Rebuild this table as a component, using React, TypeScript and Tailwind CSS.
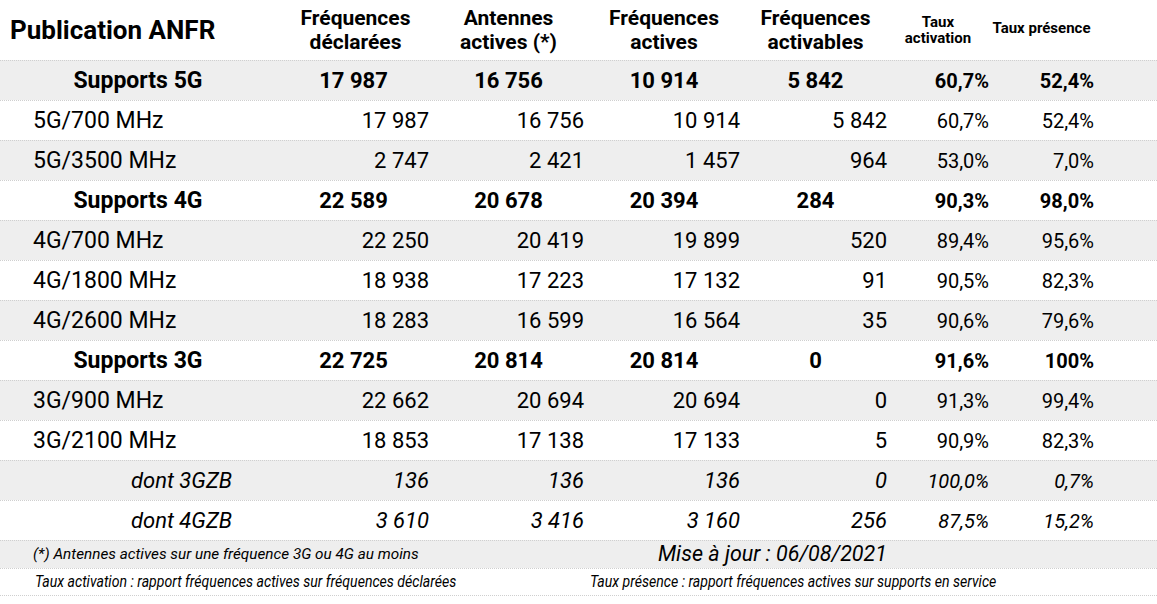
import React from 'react';

type Row = {
  label: string;
  values: string[];
  kind: 'total' | 'band' | 'zb';
};

const rows: Row[] = [
  { label: 'Supports 5G', kind: 'total', values: ['17 987', '16 756', '10 914', '5 842', '60,7%', '52,4%'] },
  { label: '5G/700 MHz', kind: 'band', values: ['17 987', '16 756', '10 914', '5 842', '60,7%', '52,4%'] },
  { label: '5G/3500 MHz', kind: 'band', values: ['2 747', '2 421', '1 457', '964', '53,0%', '7,0%'] },
  { label: 'Supports 4G', kind: 'total', values: ['22 589', '20 678', '20 394', '284', '90,3%', '98,0%'] },
  { label: '4G/700 MHz', kind: 'band', values: ['22 250', '20 419', '19 899', '520', '89,4%', '95,6%'] },
  { label: '4G/1800 MHz', kind: 'band', values: ['18 938', '17 223', '17 132', '91', '90,5%', '82,3%'] },
  { label: '4G/2600 MHz', kind: 'band', values: ['18 283', '16 599', '16 564', '35', '90,6%', '79,6%'] },
  { label: 'Supports 3G', kind: 'total', values: ['22 725', '20 814', '20 814', '0', '91,6%', '100%'] },
  { label: '3G/900 MHz', kind: 'band', values: ['22 662', '20 694', '20 694', '0', '91,3%', '99,4%'] },
  { label: '3G/2100 MHz', kind: 'band', values: ['18 853', '17 138', '17 133', '5', '90,9%', '82,3%'] },
  { label: 'dont 3GZB', kind: 'zb', values: ['136', '136', '136', '0', '100,0%', '0,7%'] },
  { label: 'dont 4GZB', kind: 'zb', values: ['3 610', '3 416', '3 160', '256', '87,5%', '15,2%'] },
];

const cols = 'grid grid-cols-[280px_155px_155px_156px_147px_102px_105px_1fr]';
const line = 'border-t border-dotted border-[#cfcfcf]';

const DataRow = ({ row, index }: { row: Row; index: number }) => {
  const bg = index % 2 === 0 ? 'bg-[#eeeeee]' : 'bg-white';
  if (row.kind === 'total') {
    return (
      <div className={`${cols} ${line} ${bg} h-10 items-center text-[22px] font-bold`}>
        <div className="text-center pr-1 pt-0.5 text-[23px]">{row.label}</div>
        {row.values.slice(0, 4).map((v, i) => (
          <div key={i} className="text-center pr-2">{v}</div>
        ))}
        {row.values.slice(4).map((v, i) => (
          <div key={i} className="text-right pr-1.5 text-[20px]">{v}</div>
        ))}
      </div>
    );
  }
  const italic = row.kind === 'zb' ? 'italic' : '';
  return (
    <div className={`${cols} ${line} ${bg} ${italic} h-10 items-center text-[22px]`}>
      <div className={row.kind === 'zb' ? 'pl-[131px]' : 'pl-[33px] pt-0.5 text-[23px]'}>{row.label}</div>
      {row.values.slice(0, 4).map((v, i) => (
        <div key={i} className="text-right pr-1.5">{v}</div>
      ))}
      {row.values.slice(4).map((v, i) => (
        <div key={i} className="text-right pr-1.5 text-[20px]">{v}</div>
      ))}
    </div>
  );
};

export default function App() {
  return (
    <div className="w-[1157px] h-[604px] bg-white text-black font-['Roboto',sans-serif]">
      {/* header */}
      <div className={`${cols} h-[60px] items-center font-bold`}>
        <div className="pl-2.5 text-[26px]">Publication ANFR</div>
        <div className="text-center pr-1 text-[21px] leading-6">Fréquences<br />déclarées</div>
        <div className="text-center pr-2 text-[21px] leading-6">Antennes<br />actives (*)</div>
        <div className="text-center pr-2 text-[21px] leading-6">Fréquences<br />actives</div>
        <div className="text-center pr-2 text-[21px] leading-6">Fréquences<br />activables</div>
        <div className="text-center pr-3 text-[15px] leading-4">Taux<br />activation</div>
        <div className="flex justify-center pr-3 pb-1 text-[15px] leading-4 whitespace-nowrap">
          <span>Taux présence</span>
        </div>
      </div>

      {rows.map((row, i) => (
        <DataRow key={row.label} row={row} index={i} />
      ))}

      {/* notes */}
      <div className={`${line} bg-[#eeeeee] h-7 flex items-center italic`}>
        <div className="w-[280px] pl-[33px] text-[15.3px] whitespace-nowrap">
          (*) Antennes actives sur une fréquence 3G ou 4G au moins
        </div>
        <div className="w-[613px] text-right pr-1.5 text-[21.5px]">Mise à jour : 06/08/2021</div>
      </div>
      <div className={`${line} border-b h-7 flex items-center italic text-[16px]`}>
        <div className="w-[590px] pl-[35px] whitespace-nowrap">
          <span className="inline-block origin-left scale-x-[0.88]">
            Taux activation : rapport fréquences actives sur fréquences déclarées
          </span>
        </div>
        <div className="whitespace-nowrap">
          <span className="inline-block origin-left scale-x-[0.88]">
            Taux présence : rapport fréquences actives sur supports en service
          </span>
        </div>
      </div>
    </div>
  );
}
